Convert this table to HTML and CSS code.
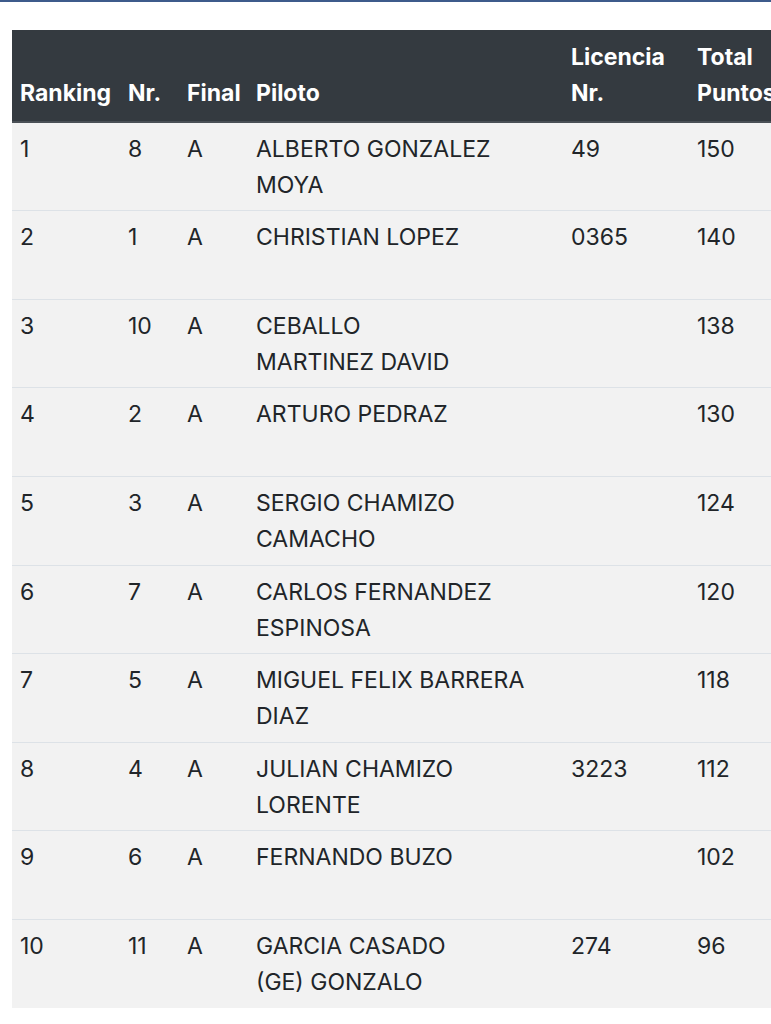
FILE: index.html
```html
<!DOCTYPE html>
<html lang="es">
<head>
<meta charset="utf-8">
<title>Ranking</title>
<link rel="stylesheet" href="styles.css">
</head>
<body>
<div class="topbar"></div>
<div class="wrap">
<table class="ranking">
<colgroup>
<col class="c-rank"><col class="c-nr"><col class="c-final"><col class="c-piloto"><col class="c-lic"><col class="c-total">
</colgroup>
<thead>
<tr><th>Ranking</th><th>Nr.</th><th>Final</th><th>Piloto</th><th>Licencia Nr.</th><th>Total Puntos</th></tr>
</thead>
<tbody>
<tr><td>1</td><td>8</td><td>A</td><td><div class="name">ALBERTO GONZALEZ<br>MOYA</div></td><td>49</td><td>150</td></tr>
<tr><td>2</td><td>1</td><td>A</td><td><div class="name">CHRISTIAN LOPEZ</div></td><td>0365</td><td>140</td></tr>
<tr><td>3</td><td>10</td><td>A</td><td><div class="name">CEBALLO<br>MARTINEZ DAVID</div></td><td></td><td>138</td></tr>
<tr><td>4</td><td>2</td><td>A</td><td><div class="name">ARTURO PEDRAZ</div></td><td></td><td>130</td></tr>
<tr><td>5</td><td>3</td><td>A</td><td><div class="name">SERGIO CHAMIZO<br>CAMACHO</div></td><td></td><td>124</td></tr>
<tr><td>6</td><td>7</td><td>A</td><td><div class="name">CARLOS FERNANDEZ<br>ESPINOSA</div></td><td></td><td>120</td></tr>
<tr><td>7</td><td>5</td><td>A</td><td><div class="name">MIGUEL FELIX BARRERA<br>DIAZ</div></td><td></td><td>118</td></tr>
<tr><td>8</td><td>4</td><td>A</td><td><div class="name">JULIAN CHAMIZO<br>LORENTE</div></td><td>3223</td><td>112</td></tr>
<tr><td>9</td><td>6</td><td>A</td><td><div class="name">FERNANDO BUZO</div></td><td></td><td>102</td></tr>
<tr><td>10</td><td>11</td><td>A</td><td><div class="name">GARCIA CASADO<br>(GE) GONZALO</div></td><td>274</td><td>96</td></tr>
</tbody>
</table>
</div>
</body>
</html>
```
FILE: styles.css
```css
html, body {
  margin: 0;
  padding: 0;
  background: #ffffff;
}
body {
  font-family: Inter, "Liberation Sans", Arial, sans-serif;
  color: #212529;
  overflow: hidden;
}
.topbar {
  height: 2px;
  background: #3d5b8b;
}
.wrap {
  padding: 28px 0 0 12px;
  overflow: hidden;
}
.ranking {
  border-collapse: collapse;
  table-layout: fixed;
  width: 780px;
  font-size: 23px;
  line-height: 36.3px;
  background: #f2f2f2;
}
.c-rank { width: 108px; }
.c-nr { width: 59px; }
.c-final { width: 69px; }
.c-piloto { width: 315px; }
.c-lic { width: 126px; }
.c-total { width: 103px; }
.ranking th {
  background: #343a40;
  color: #ffffff;
  font-weight: 700;
  text-align: left;
  vertical-align: bottom;
  padding: 9px 8px;
  border-bottom: 2px solid #4a5056;
  white-space: nowrap;
}
.ranking th:nth-child(5),
.ranking th:nth-child(6) {
  white-space: normal;
}
.ranking td {
  text-align: left;
  vertical-align: top;
  padding: 8px 8px 7px;
  border-top: 1px solid #dde2e7;
}
.ranking tbody tr:first-child td {
  border-top: 0;
}
.name {
  min-height: 72.6px;
}
```
